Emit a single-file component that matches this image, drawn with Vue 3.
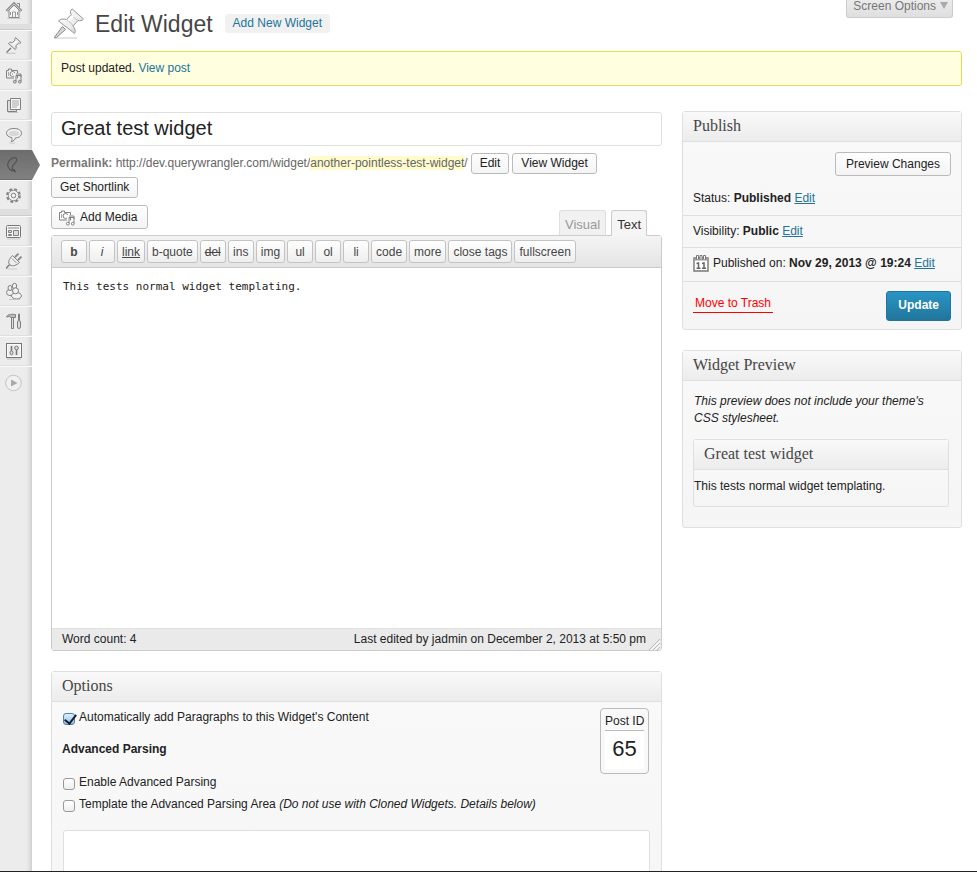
<script setup>
import { ref } from 'vue'

const title = ref('Great test widget')
const content = ref('This tests normal widget templating.')
const autoParagraphs = ref(true)
const advanced = ref(false)
const templateArea = ref(false)
const parsing = ref('')

const tags = [
  { text: 'b', kind: 'bold' },
  { text: 'i', kind: 'italic' },
  { text: 'link', kind: 'under' },
  { text: 'b-quote' },
  { text: 'del', kind: 'strike' },
  { text: 'ins' },
  { text: 'img' },
  { text: 'ul' },
  { text: 'ol' },
  { text: 'li' },
  { text: 'code' },
  { text: 'more' },
  { text: 'close tags' },
  { text: 'fullscreen' },
]
</script>

<template>
  <div class="shell">
    <nav class="menu" aria-label="Admin menu">
      <a class="item first" href="#" aria-label="Dashboard">
        <svg viewBox="0 0 18 18"><path d="M4 9v7.5h10V9L9 4z" fill="#f4f4f4" stroke="#888" /><path d="M1.500 10 9 2.500l7.500 7.500" fill="none" stroke="#808080" stroke-width="2.400" /><path d="M2 9.800 9 2.800l7 7" fill="none" stroke="#e8e8e8" stroke-width=".9" /><path d="M12 2.500h2.500V6" fill="none" stroke="#888" /><path d="M7.500 16v-5h3v5M5.500 11v3M12.500 11v3" fill="none" stroke="#999" /><path d="M2 17.500h14" stroke="#ccc" /></svg>
      </a>
      <div class="sep"></div>
      <a class="item" href="#" aria-label="Posts">
        <svg viewBox="0 0 18 18"><path d="M6 12 1.500 16.500" stroke="#777" stroke-width="1.300" /><path d="M10.500 1.500 16 6.500c-.8.900-1.700.800-2.500.7l-2.700 2.600c.5 1.500.4 2.900-.6 3.700L3.500 7.500c.9-1.300 2.500-1.400 4-1L10 4.300c-.3-1-.2-2 .5-2.800z" fill="#ececec" stroke="#808080" /><path d="m9 7.800 2.500-2.500" stroke="#fff" stroke-width="1.400" /><path d="M1.500 17.300h9" stroke="#c4c4c4" /></svg>
      </a>
      <a class="item" href="#" aria-label="Media">
        <svg viewBox="0 0 18 18"><path d="M1.500 4.500h2V3h3v1.500h6V12h-11z" fill="#eee" stroke="#808080" /><circle cx="7.500" cy="8" r="2.500" fill="#fff" stroke="#808080" /><circle cx="7.500" cy="8" r=".8" fill="#999" /><path d="M3.500 6v4" stroke="#aaa" /><path d="M10.500 15V8.500h5V15" fill="none" stroke="#eee" stroke-width="3" /><path d="M11 15.500V9.500h5v6M11 8h5v3" fill="none" stroke="#808080" /><circle cx="9.800" cy="15.700" r="1.400" fill="#ccc" stroke="#808080" /><circle cx="14.800" cy="15.700" r="1.400" fill="#ccc" stroke="#808080" /></svg>
      </a>
      <a class="item" href="#" aria-label="Pages">
        <svg viewBox="0 0 18 18"><path d="M5 4.500H2.500v11h9V14" fill="#ddd" stroke="#808080" /><path d="M5.500 2.500h10v11h-10z" fill="#f5f5f5" stroke="#808080" /><path d="M7 5h7M7 7h7M7 9h7M7 11h5" stroke="#aaa" /><path d="M3 16.500h10" stroke="#c4c4c4" /></svg>
      </a>
      <a class="item" href="#" aria-label="Comments">
        <svg viewBox="0 0 18 18"><path d="M9 2.500c4.300 0 7.500 1.800 7.500 4.700s-2.800 4.600-6 4.600c-.6 2-2 3.500-4.300 4 .8-1.300 1-2.700.7-4.200C3.700 11 1.500 9.500 1.500 7.200c0-2.900 3.200-4.700 7.500-4.700z" fill="#f2f2f2" stroke="#808080" /><ellipse cx="9" cy="7.500" rx="5.500" ry="2.800" fill="#d8d8d8" /><path d="M4 17h6" stroke="#ccc" /></svg>
      </a>
      <a class="item current" href="#" aria-label="Widgets" aria-current="page">
        <svg viewBox="0 0 18 18"><path d="M7.500 15C3.500 13 1.800 10 3.200 6.500 4.600 3.200 8 1.200 10.500 2c2 .8 1.500 3-.2 4.800C8.500 8.800 6.500 10 7 12c.4 1.500 2 2.500 4 4" fill="none" stroke="#505050" stroke-width="1.100" /><path d="m6.500 14.500 3-1.500.5 3z" fill="#505050" /></svg>
      </a>
      <a class="item" href="#" aria-label="Query settings">
        <svg viewBox="0 0 18 18"><circle cx="8.500" cy="9.500" r="6.300" fill="none" stroke="#858585" stroke-width="2.200" stroke-dasharray="2.900 2.050" /><circle cx="8.500" cy="9.500" r="5.200" fill="#f2f2f2" stroke="#8c8c8c" /><circle cx="8.500" cy="9.500" r="2.300" fill="#eee" stroke="#808080" /></svg>
      </a>
      <div class="sep wide"></div>
      <a class="item" href="#" aria-label="Appearance">
        <svg viewBox="0 0 18 18"><rect x="1.500" y="3.500" width="14" height="12" rx="1" fill="#f6f6f6" stroke="#777" /><path d="M3 6h11" stroke="#888" /><path d="M3.500 8.500h3v2h-3zM3.500 12.500h3v1h-3zM8.500 8.500h5v5h-5z" fill="#ddd" stroke="#808080" /><path d="M2 17h13" stroke="#ccc" /></svg>
      </a>
      <a class="item" href="#" aria-label="Plugins">
        <svg viewBox="0 0 18 18"><path d="M1 16.500c1.500-.5 1-2.500 3.500-3.500" fill="none" stroke="#808080" stroke-width="1.600" /><path d="m10 5 3.500-3.300M13 8l3.500-3.300" stroke="#858585" stroke-width="1.800" /><path d="m7.500 3.500 7 7c-3 2.500-6.500 4.500-9.500 2.500-2.500-2.500-1-6 2.500-9.500z" fill="#eee" stroke="#808080" /><path d="m7 6.500 4.500 4.500" stroke="#999" /><path d="M3 17h9" stroke="#ccc" /></svg>
      </a>
      <a class="item" href="#" aria-label="Users">
        <svg viewBox="0 0 18 18"><g fill="#f0f0f0" stroke="#808080"><ellipse cx="5" cy="10.500" rx="3.500" ry="3" /><ellipse cx="5" cy="6" rx="2" ry="2.500" /><ellipse cx="9.500" cy="4" rx="2.200" ry="2.700" /><ellipse cx="11.500" cy="13.800" rx="5" ry="3.200" /><circle cx="10.500" cy="8.800" r="3" /></g><path d="M4 17.500h11" stroke="#c4c4c4" /></svg>
      </a>
      <a class="item" href="#" aria-label="Tools">
        <svg viewBox="0 0 18 18"><path d="M1.500 5C2.500 2.500 5 2 10.500 2.500v3H6L4.500 4.500z" fill="#bbb" stroke="#808080" /><path d="M6.500 5.500h2v11h-2z" fill="#ddd" stroke="#808080" /><path d="M13.500 2h1v6h-1z" fill="#ccc" stroke="#808080" /><rect x="12.500" y="8.500" width="3" height="8" rx="1.500" fill="#ddd" stroke="#808080" /></svg>
      </a>
      <a class="item" href="#" aria-label="Settings">
        <svg viewBox="0 0 18 18"><rect x="1.500" y="1.500" width="15" height="14" fill="#fafafa" stroke="#777" /><rect x="3" y="3" width="12" height="11" fill="#eee" /><path d="M6.500 4v5M11.500 8v5" stroke="#777" stroke-width="1.600" /><ellipse cx="6.500" cy="10.800" rx="1.500" ry="2" fill="#ddd" stroke="#777" /><circle cx="11.500" cy="6" r="1.800" fill="#ddd" stroke="#777" /><path d="M2 17h14" stroke="#bbb" /></svg>
      </a>
      <button class="collapse" type="button" aria-label="Collapse menu">
        <svg viewBox="0 0 18 18"><circle cx="8.500" cy="9" r="7.800" fill="#f0f0f0" stroke="#c4c4c4" /><path d="M6 5.500 12.500 9 6 12.500z" fill="#aaa" /></svg>
      </button>
    </nav>

    <main class="page">
      <header class="top">
        <svg class="pin" viewBox="0 0 32 32">
          <defs><linearGradient id="metal" x1="0" y1="0" x2="1" y2="1"><stop offset="0" stop-color="#fff" /><stop offset=".6" stop-color="#ececec" /><stop offset="1" stop-color="#b8b8b8" /></linearGradient></defs>
          <path d="M2 30h22" stroke="#c8c8c8" />
          <path d="M9.500 18.500 2 28.500 1.500 30l2-.5 9-8z" fill="#d8d8d8" stroke="#888" />
          <path d="M19 .8 30.500 11c-1.500 1.800-3.500 2-5.500 1.500L20 18c2 2.500 3 5.200 1.500 7.500L5.500 13c2-2 4.500-2.500 8-1.500l4.700-5c-1.200-2-1-4 .8-5.700z" fill="url(#metal)" stroke="#999" />
          <path d="M18.200 6.500c1.800 2.500 4 4.500 6.800 6M13.500 11.500c2.500 1.500 4.800 3.700 6.500 6.500" fill="none" stroke="#c0c0c0" />
          <path d="m15.500 12.500 4.500-4.700" stroke="#fff" stroke-width="2.200" />
        </svg>
        <h1>Edit Widget</h1>
        <a class="add-new" href="#">Add New Widget</a>
        <button class="screen-options" type="button">Screen Options <span class="arrow"></span></button>
      </header>

      <p class="notice">Post updated. <a href="#">View post</a></p>

      <div class="columns">
        <div class="primary">
          <input v-model="title" class="title" type="text" aria-label="Title" />
          <div class="permalink">
            <span class="address"><strong>Permalink:</strong> http://dev.querywrangler.com/widget/<mark>another-pointless-test-widget</mark>/</span>
            <button class="btn small" type="button">Edit</button>
            <button class="btn small" type="button">View Widget</button>
            <button class="btn small" type="button">Get Shortlink</button>
          </div>

          <div class="editor-tools">
            <button class="btn media" type="button">
              <svg viewBox="0 0 18 18"><path d="M1.500 4.500h2V3h3v1.500h6V12h-11z" fill="#fff" stroke="#808080" /><circle cx="7.500" cy="8" r="2.500" fill="#fff" stroke="#808080" /><path d="M3.500 6v4" stroke="#aaa" /><path d="M10.500 15V8.500h5V15" fill="none" stroke="#fff" stroke-width="3" /><path d="M11 15.500V9.500h5v6M11 8h5v3" fill="none" stroke="#808080" /><circle cx="9.800" cy="15.700" r="1.400" fill="#fff" stroke="#808080" /><circle cx="14.800" cy="15.700" r="1.400" fill="#fff" stroke="#808080" /></svg>
              Add Media
            </button>
            <div class="tabs">
              <button class="tab" type="button">Visual</button>
              <button class="tab active" type="button">Text</button>
            </div>
          </div>

          <div class="editor">
            <div class="toolbar">
              <button v-for="t in tags" :key="t.text" type="button" class="tag" :class="t.kind">{{ t.text }}</button>
            </div>
            <textarea v-model="content" class="content" aria-label="Content"></textarea>
            <div class="status">
              <span>Word count: 4</span>
              <span class="edited">Last edited by jadmin on December 2, 2013 at 5:50 pm</span>
              <svg class="grip" viewBox="0 0 12 12"><path d="M1 12 12 1M5 12l7-7M9 12l3-3" stroke="#bbb" /><path d="M3 12l9-9M7 12l5-5" stroke="#fff" /></svg>
            </div>
          </div>

          <section class="box options">
            <h2>Options</h2>
            <div class="options-body">
              <div class="fields">
                <label class="check"><input v-model="autoParagraphs" type="checkbox" /><span>Automatically add Paragraphs to this Widget's Content</span></label>
                <h3>Advanced Parsing</h3>
                <label class="check"><input v-model="advanced" type="checkbox" /><span>Enable Advanced Parsing</span></label>
                <label class="check"><input v-model="templateArea" type="checkbox" /><span>Template the Advanced Parsing Area <em>(Do not use with Cloned Widgets. Details below)</em></span></label>
              </div>
              <div class="post-id">
                <span class="id-label">Post ID</span>
                <span class="id-value">65</span>
              </div>
            </div>
            <textarea v-model="parsing" class="parsing" aria-label="Advanced parsing template"></textarea>
          </section>
        </div>

        <aside class="secondary">
          <section class="box">
            <h2>Publish</h2>
            <div class="preview-row"><button class="btn" type="button">Preview Changes</button></div>
            <p class="row status-row">Status: <strong>Published</strong> <a href="#">Edit</a></p>
            <p class="row">Visibility: <strong>Public</strong> <a href="#">Edit</a></p>
            <p class="row dated">
              <svg class="calendar" viewBox="0 0 16 18"><path d="M1 4h14v13H1z" fill="#fff" stroke="#777" stroke-width="1.400" /><path d="M1 4h14v2.500H1z" fill="#999" /><path d="M3.500 5V1.500h2V5M7 5V1.500h2V5M10.500 5V1.500h2V5" fill="#fff" stroke="#777" /><path d="M3.500 9.500 5.500 9v5M3.500 14.200h4M9 9.500l2-.5v5M9 14.200h4" fill="none" stroke="#666" stroke-width="1.500" /></svg>
              <span>Published on: <strong>Nov 29, 2013 @ 19:24</strong> <a href="#">Edit</a></span>
            </p>
            <div class="actions">
              <a class="trash" href="#">Move to Trash</a>
              <button class="update" type="button">Update</button>
            </div>
          </section>

          <section class="box">
            <h2>Widget Preview</h2>
            <div class="preview-body">
              <p><em>This preview does not include your theme's CSS stylesheet.</em></p>
              <div class="box inner">
                <h2>Great test widget</h2>
                <p>This tests normal widget templating.</p>
              </div>
            </div>
          </section>
        </aside>
      </div>
    </main>
  </div>
</template>

<style>
body {
  margin: 0;
  background: #fff;
}
</style>

<style scoped>
* {
  box-sizing: border-box;
}
.shell {
  display: flex;
  height: 100vh;
  overflow: hidden;
  border-bottom: 1px solid #222;
  font: 12px/17px "Liberation Sans", Arial, sans-serif;
  color: #222;
}
button,
input,
textarea {
  font: inherit;
  color: inherit;
  margin: 0;
}
h1,
h2,
h3,
p {
  margin: 0;
}
a {
  color: #21759b;
}

/* Menu */
.menu {
  flex: none;
  width: 32px;
  background: linear-gradient(to right, #ececec 26px, #e2e2e2 29px, #cfcfcf 32px);
}
.item {
  position: relative;
  display: flex;
  align-items: center;
  height: 30px;
  padding-left: 5px;
  border-top: 1px solid #f9f9f9;
  border-bottom: 1px solid #dfdfdf;
}
.item.first {
  height: 25px;
  padding-bottom: 4px;
  border-top: 0;
}
.item svg,
.collapse svg {
  width: 18px;
  height: 18px;
}
.sep {
  height: 5px;
  background: #dedede;
  border-bottom: 1px solid #ccc;
}
.sep.wide {
  height: 6px;
}
.item.current {
  background: linear-gradient(#6d6d6d, #808080);
  border-color: #6d6d6d;
}
.item.current::after {
  content: "";
  position: absolute;
  left: 100%;
  top: -1px;
  width: 8px;
  height: 30px;
  background: linear-gradient(#6d6d6d, #808080);
  clip-path: polygon(0 0, 100% 50%, 0 100%);
}
.collapse {
  display: flex;
  width: 100%;
  padding: 7px 0 0 5px;
  border: 0;
  border-top: 1px solid #f9f9f9;
  background: none;
}

/* Page */
.page {
  flex: 1;
  min-width: 0;
  padding: 0 15px 0 19px;
  overflow: auto;
  scrollbar-width: none;
}
.top {
  display: flex;
  align-items: center;
  height: 51px;
  padding: 0 9px 4px 2px;
}
.pin {
  width: 32px;
  height: 32px;
}
h1 {
  margin: 0 12px 0 10px;
  font-size: 23px;
  line-height: 32px;
  font-weight: 400;
  color: #464646;
}
.add-new {
  padding: 1px 8px;
  border-radius: 3px;
  background: #f1f1f1;
  text-decoration: none;
}
.screen-options {
  display: flex;
  align-items: center;
  gap: 4px;
  align-self: flex-start;
  margin-left: auto;
  height: 18px;
  padding: 0 4px 6px 6px;
  border: 1px solid #ccc;
  border-top: 0;
  border-radius: 0 0 3px 3px;
  background: linear-gradient(#ebebeb, #dfdfdf);
  line-height: 12px;
  color: #777;
}
.arrow {
  border: 4px solid transparent;
  border-top: 7px solid #aaa;
  border-bottom: 0;
}
.notice {
  padding: 8px 9px;
  border: 1px solid #e6db55;
  border-radius: 3px;
  background: #ffffe0;
}
.notice a {
  text-decoration: none;
}
.columns {
  display: flex;
  gap: 20px;
  padding-top: 25px;
}
.primary {
  flex: 1;
  min-width: 0;
}
.secondary {
  flex: none;
  width: 280px;
}
.title {
  display: block;
  width: 100%;
  height: 34px;
  margin: 1px 0 7px;
  padding: 0 9px 2px;
  border: 1px solid #dfdfdf;
  border-radius: 3px;
  background: #fff;
  font-size: 20px;
  outline: 0;
}
.permalink {
  display: flex;
  flex-wrap: wrap;
  align-items: center;
  gap: 3px;
  color: #666;
}
.permalink strong {
  color: #777;
}
mark {
  background: #fffbcc;
  color: inherit;
}
.btn {
  display: inline-flex;
  align-items: center;
  height: 24px;
  padding: 0 10px;
  border: 1px solid #bbb;
  border-radius: 3px;
  background: linear-gradient(#fefefe, #f4f4f4);
  color: #222;
  white-space: nowrap;
}
.btn.small {
  height: 21px;
  padding: 0 8px;
}
.editor-tools {
  display: flex;
  justify-content: space-between;
  height: 37px;
  padding-top: 7px;
}
.media {
  gap: 4px;
  padding: 0 10px 0 6px;
}
.media svg {
  width: 18px;
  height: 18px;
}
.tabs {
  display: flex;
  align-items: flex-end;
  gap: 5px;
  padding-right: 15px;
}
.tab {
  height: 25px;
  padding: 2px 5px 0;
  border: 1px solid #dfdfdf;
  border-bottom: 0;
  border-radius: 3px 3px 0 0;
  background: #f1f1f1;
  font-size: 13px;
  color: #999;
}
.tab.active {
  position: relative;
  height: 26px;
  margin-bottom: -1px;
  border-color: #ccc;
  background: #f5f5f5;
  color: #333;
}
.editor {
  margin-bottom: 20px;
  border: 1px solid #ccc;
  border-radius: 3px;
}
.toolbar {
  display: flex;
  flex-wrap: wrap;
  gap: 2px;
  padding: 4px 9px;
  border-bottom: 1px solid #ccc;
  background: linear-gradient(#f4f4f4, #e4e4e4);
}
.tag {
  min-width: 26px;
  height: 23px;
  padding: 1px 4px 0;
  border: 1px solid #c3c3c3;
  border-radius: 3px;
  background: linear-gradient(#fff, #eee);
  color: #464646;
}
.bold {
  font-weight: 700;
}
.italic {
  font-style: italic;
}
.under {
  text-decoration: underline;
}
.strike {
  text-decoration: line-through;
}
.content {
  display: block;
  width: 100%;
  height: 360px;
  padding: 10px 11px;
  border: 0;
  background: #fff;
  font: 11px/17px "DejaVu Sans Mono", monospace;
  resize: none;
  outline: 0;
}
.status {
  display: flex;
  align-items: center;
  height: 22px;
  padding: 0 1px 0 10px;
  border-top: 1px solid #dfdfdf;
  background: #eaeaea;
}
.edited {
  margin: 0 2px 0 auto;
}
.grip {
  width: 12px;
  height: 12px;
  align-self: flex-end;
}

/* Boxes */
.box {
  margin-bottom: 20px;
  border: 1px solid #dfdfdf;
  border-radius: 3px;
  background: linear-gradient(#f9f9f9, #f5f5f5);
}
.box h2 {
  height: 30px;
  padding: 0 10px;
  border-bottom: 1px solid #dfdfdf;
  background: linear-gradient(#f9f9f9, #ececec);
  font: 16px/28px "Liberation Serif", Georgia, serif;
  color: #464646;
}
.preview-row {
  display: flex;
  justify-content: flex-end;
  padding: 10px 10px 0;
}
.row {
  padding: 7px 10px;
  border-bottom: 1px solid #dfdfdf;
}
.status-row {
  padding-top: 14px;
  padding-bottom: 8px;
}
.dated {
  display: flex;
  align-items: center;
  gap: 4px;
  padding-top: 6px;
  padding-bottom: 9px;
}
.calendar {
  width: 16px;
  height: 18px;
}
.actions {
  display: flex;
  align-items: flex-start;
  justify-content: space-between;
  padding: 9px 10px 8px;
}
.trash {
  margin-top: 4px;
  padding: 0 2px;
  border-bottom: 1px solid #f00;
  color: #f00;
  text-decoration: none;
}
.update {
  height: 30px;
  padding: 0 11px 2px;
  border: 1px solid #21759b;
  border-radius: 3px;
  background: linear-gradient(#2a95c5, #21759b);
  font-weight: 700;
  color: #fff;
}
.preview-body {
  padding: 12px 12px 20px 10px;
}
.preview-body > p {
  padding-left: 1px;
}
.inner {
  margin: 12px 0 0;
}
.inner p {
  padding: 8px 0 11px;
}
.options-body {
  display: flex;
  align-items: flex-start;
  justify-content: space-between;
  padding: 6px 12px 12px 10px;
}
.fields {
  padding-top: 1px;
}
.check {
  display: flex;
  gap: 4px;
  padding-left: 1px;
  margin-bottom: 5px;
}
.check input {
  appearance: none;
  flex: none;
  width: 12px;
  height: 12px;
  margin-top: 4px;
  border: 1px solid #999;
  border-radius: 3px;
  background: linear-gradient(#fff, #eee);
}
.check input:checked {
  position: relative;
  border-color: #5580a8;
  background: linear-gradient(#dff0fb, #8cc3ea);
}
.check input:checked::after {
  content: "";
  position: absolute;
  left: 3px;
  top: -2px;
  width: 5px;
  height: 10px;
  border: solid #1b2030;
  border-width: 0 2px 2px 0;
  transform: rotate(38deg);
}
h3 {
  margin: 15px 0 16px;
  font-size: 12px;
  line-height: 17px;
}
.post-id {
  flex: none;
  width: 49px;
  height: 66px;
  padding: 4px;
  border: 1px solid #bbb;
  border-radius: 4px;
  text-align: center;
}
.id-label,
.id-value {
  display: block;
  white-space: nowrap;
}
.id-label {
  border-bottom: 1px solid #bbb;
}
.id-value {
  height: 38px;
  background: #fff;
  font-size: 22px;
  line-height: 36px;
}
.parsing {
  display: block;
  width: calc(100% - 22px);
  height: 150px;
  margin: 0 11px 11px;
  border: 1px solid #dfdfdf;
  border-radius: 3px;
  background: #fff;
  resize: none;
}
</style>
